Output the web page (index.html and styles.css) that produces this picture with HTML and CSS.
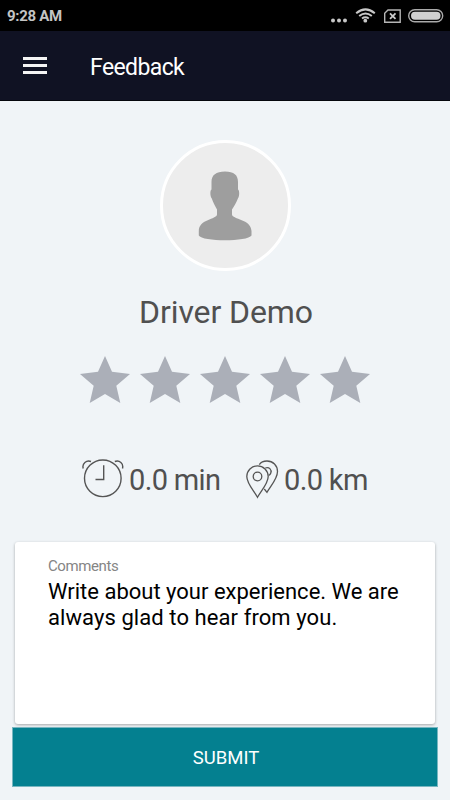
FILE: index.html
```html
<!DOCTYPE html>
<html lang="en">
<head>
<meta charset="utf-8">
<title>Feedback</title>
<link rel="stylesheet" href="styles.css">
</head>
<body>
<div class="statusbar">
  <span class="clock">9:28 AM</span>
  <svg class="status-icons" width="120" height="31" viewBox="0 0 120 31">
    <g fill="#c8c8c8"><circle cx="3" cy="20.6" r="2"/><circle cx="9" cy="20.6" r="2"/><circle cx="15" cy="20.6" r="2"/><circle cx="35.300" cy="20.700" r="1.900"/></g>
    <g fill="none" stroke="#c8c8c8" stroke-width="2"><path d="M26.200 13.200Q35.500 5.500 44.800 13.200M29.200 16Q35.500 11 41.800 16M32 18.500Q35.400 16 38.800 18.500"/></g>
    <path d="M58 10H70.200V22.200H54.700V13.300Z" fill="none" stroke="#b5b5b5" stroke-width="1.400"/>
    <path d="M60 13.300l5.500 5.500M65.500 13.300L60 18.800" stroke="#ccc" stroke-width="1.800"/>
    <rect x="78.700" y="9.700" width="34" height="12" rx="6" fill="none" stroke="#aaa" stroke-width="1.400"/>
    <rect x="81" y="11.700" width="29.500" height="8" rx="4" fill="#d0d0d0"/>
  </svg>
</div>
<header class="appbar">
  <div class="menu"><i></i><i></i><i></i></div>
  <h1 class="title">Feedback</h1>
</header>
<main class="content">
  <div class="avatar">
    <svg width="54" height="70" viewBox="0 0 54 70"><path d="M27 .5C36 .5 40 4 40 11V18.500C41.700 19 41.500 26 39.900 27.500C38.500 31 36.500 35 34 38.500V43.500C34.500 48.500 53 48 53.500 60V64.500C50 70.800 4 70.800 .8 64.500V60C1 48 18.500 48.500 19 43.500V38.500C17 35 15 31 13.800 27.500C12 26 11.900 19 13.500 18.500V11C13.500 4 18 .5 27 .5Z" fill="#9e9e9e"/></svg>
  </div>
  <h2 class="name">Driver Demo</h2>
  <div class="stars">
    <svg class="star" viewBox="0 0 50 47"><use href="#star"/></svg>
    <svg class="star" viewBox="0 0 50 47"><use href="#star"/></svg>
    <svg class="star" viewBox="0 0 50 47"><path id="star" d="M25 0L32 15.700L50 18L36.300 29.700L40.300 47L25 38L9.700 47L13.700 29.700L0 18L18 15.700Z"/></svg>
    <svg class="star" viewBox="0 0 50 47"><use href="#star"/></svg>
    <svg class="star" viewBox="0 0 50 47"><use href="#star"/></svg>
  </div>
  <div class="stats">
    <svg class="clock-icon" width="42" height="40" viewBox="0 0 42 40"><g fill="none" stroke="#555" stroke-width="1.400"><circle cx="20.800" cy="19.300" r="18.300"/><path d="M21.700 6.300V20.500H13.500M1.200 9.500C-.2 4.500 4.500 .8 9 2.500M40.500 9.500C41.800 4.500 37.500 .8 32.800 2.500"/></g></svg>
    <span class="stat time">0.0 min</span>
    <svg class="pin-icon" width="33" height="39" viewBox="0 0 33 39"><g fill="none" stroke="#555" stroke-width="1.300"><path d="M11.500 37.300C8 31 .8 23.500 .8 16.500A10.700 10.700 0 0 1 22.200 16.500C22.200 23.500 15 31 11.500 37.300Z"/><circle cx="11.500" cy="16.500" r="4.300"/><path d="M13.300 4.600C15 2 18 1 21 1C27 1 31.500 5.500 31.500 11.500C31.500 19 24.500 26 21 32.300L18.300 29M19.300 8C23 6.500 26 9.500 24.800 13C24.400 14.300 23.700 15 22.700 15.400"/></g></svg>
    <span class="stat distance">0.0 km</span>
  </div>
  <section class="card">
    <div class="label">Comments</div>
    <div class="comment">Write about your experience. We are<br><span class="second-line">always glad to hear from you.</span></div>
  </section>
  <button class="submit">SUBMIT</button>
</main>
</body>
</html>
```
FILE: styles.css
```css
* { box-sizing: border-box; }
body {
  margin: 0;
  width: 450px;
  height: 800px;
  overflow: hidden;
  background: #f0f4f7;
  font-family: Roboto, "Liberation Sans", sans-serif;
}
.statusbar {
  height: 31px;
  background: #000;
  display: flex;
  justify-content: space-between;
  padding-left: 7px;
}
.clock {
  color: #c4c4c4;
  font-size: 15px;
  font-weight: 700;
  letter-spacing: -.3px;
  line-height: 33px;
}
.appbar {
  height: 70px;
  background: #101223;
  border-bottom: 1px solid #05060c;
  display: flex;
  align-items: center;
  padding-left: 23px;
}
.menu {
  width: 24px;
  display: grid;
  gap: 4px;
}
.menu i { height: 3px; background: #f4f4f4; }
.title {
  margin: 4px 0 0 43px;
  color: #fff;
  font-size: 23px;
  font-weight: 400;
  letter-spacing: -.6px;
}
.content {
  display: flex;
  flex-direction: column;
  align-items: center;
}
.avatar {
  margin-top: 39px;
  width: 131px;
  height: 131px;
  border: 3px solid #fff;
  border-radius: 50%;
  background: #ededed;
  display: flex;
  justify-content: center;
  padding-top: 28px;
}
.name {
  margin: 21px 0 0;
  height: 40px;
  line-height: 40px;
  font-size: 32px;
  font-weight: 400;
  letter-spacing: -.1px;
  color: #505050;
  padding-left: 2px;
}
.stars {
  display: flex;
  gap: 10px;
  margin-top: 24px;
}
.star { width: 50px; height: 47px; fill: #abafb8; }
.stats {
  align-self: stretch;
  display: flex;
  align-items: center;
  height: 40px;
  margin-top: 56px;
  padding-left: 82px;
}
.stat {
  padding-top: 2px;
  font-size: 29px;
  line-height: 40px;
  letter-spacing: -.65px;
  color: #505050;
  white-space: nowrap;
}
.time { margin-left: 5px; width: 117px; }
.distance { margin-left: 5px; }
.clock-icon, .pin-icon { flex: none; }
.card {
  width: 420px;
  height: 182px;
  margin-top: 43px;
  padding: 15px 33px;
  background: #fff;
  border-radius: 3px;
  box-shadow: 0 1px 3px rgba(0, 0, 0, .32);
}
.label {
  font-size: 15px;
  line-height: 18px;
  letter-spacing: -.4px;
  color: #858585;
}
.comment {
  margin-top: 4px;
  font-size: 22px;
  line-height: 26px;
  color: #000;
  white-space: nowrap;
}
.second-line { letter-spacing: .08px; }
.submit {
  width: 426px;
  height: 60px;
  margin-top: 3px;
  padding: 1px 0 0 2px;
  border: 1px solid #78b6c0;
  background: #048090;
  color: #fff;
  font: 400 18.5px Roboto, "Liberation Sans", sans-serif;
}
```
